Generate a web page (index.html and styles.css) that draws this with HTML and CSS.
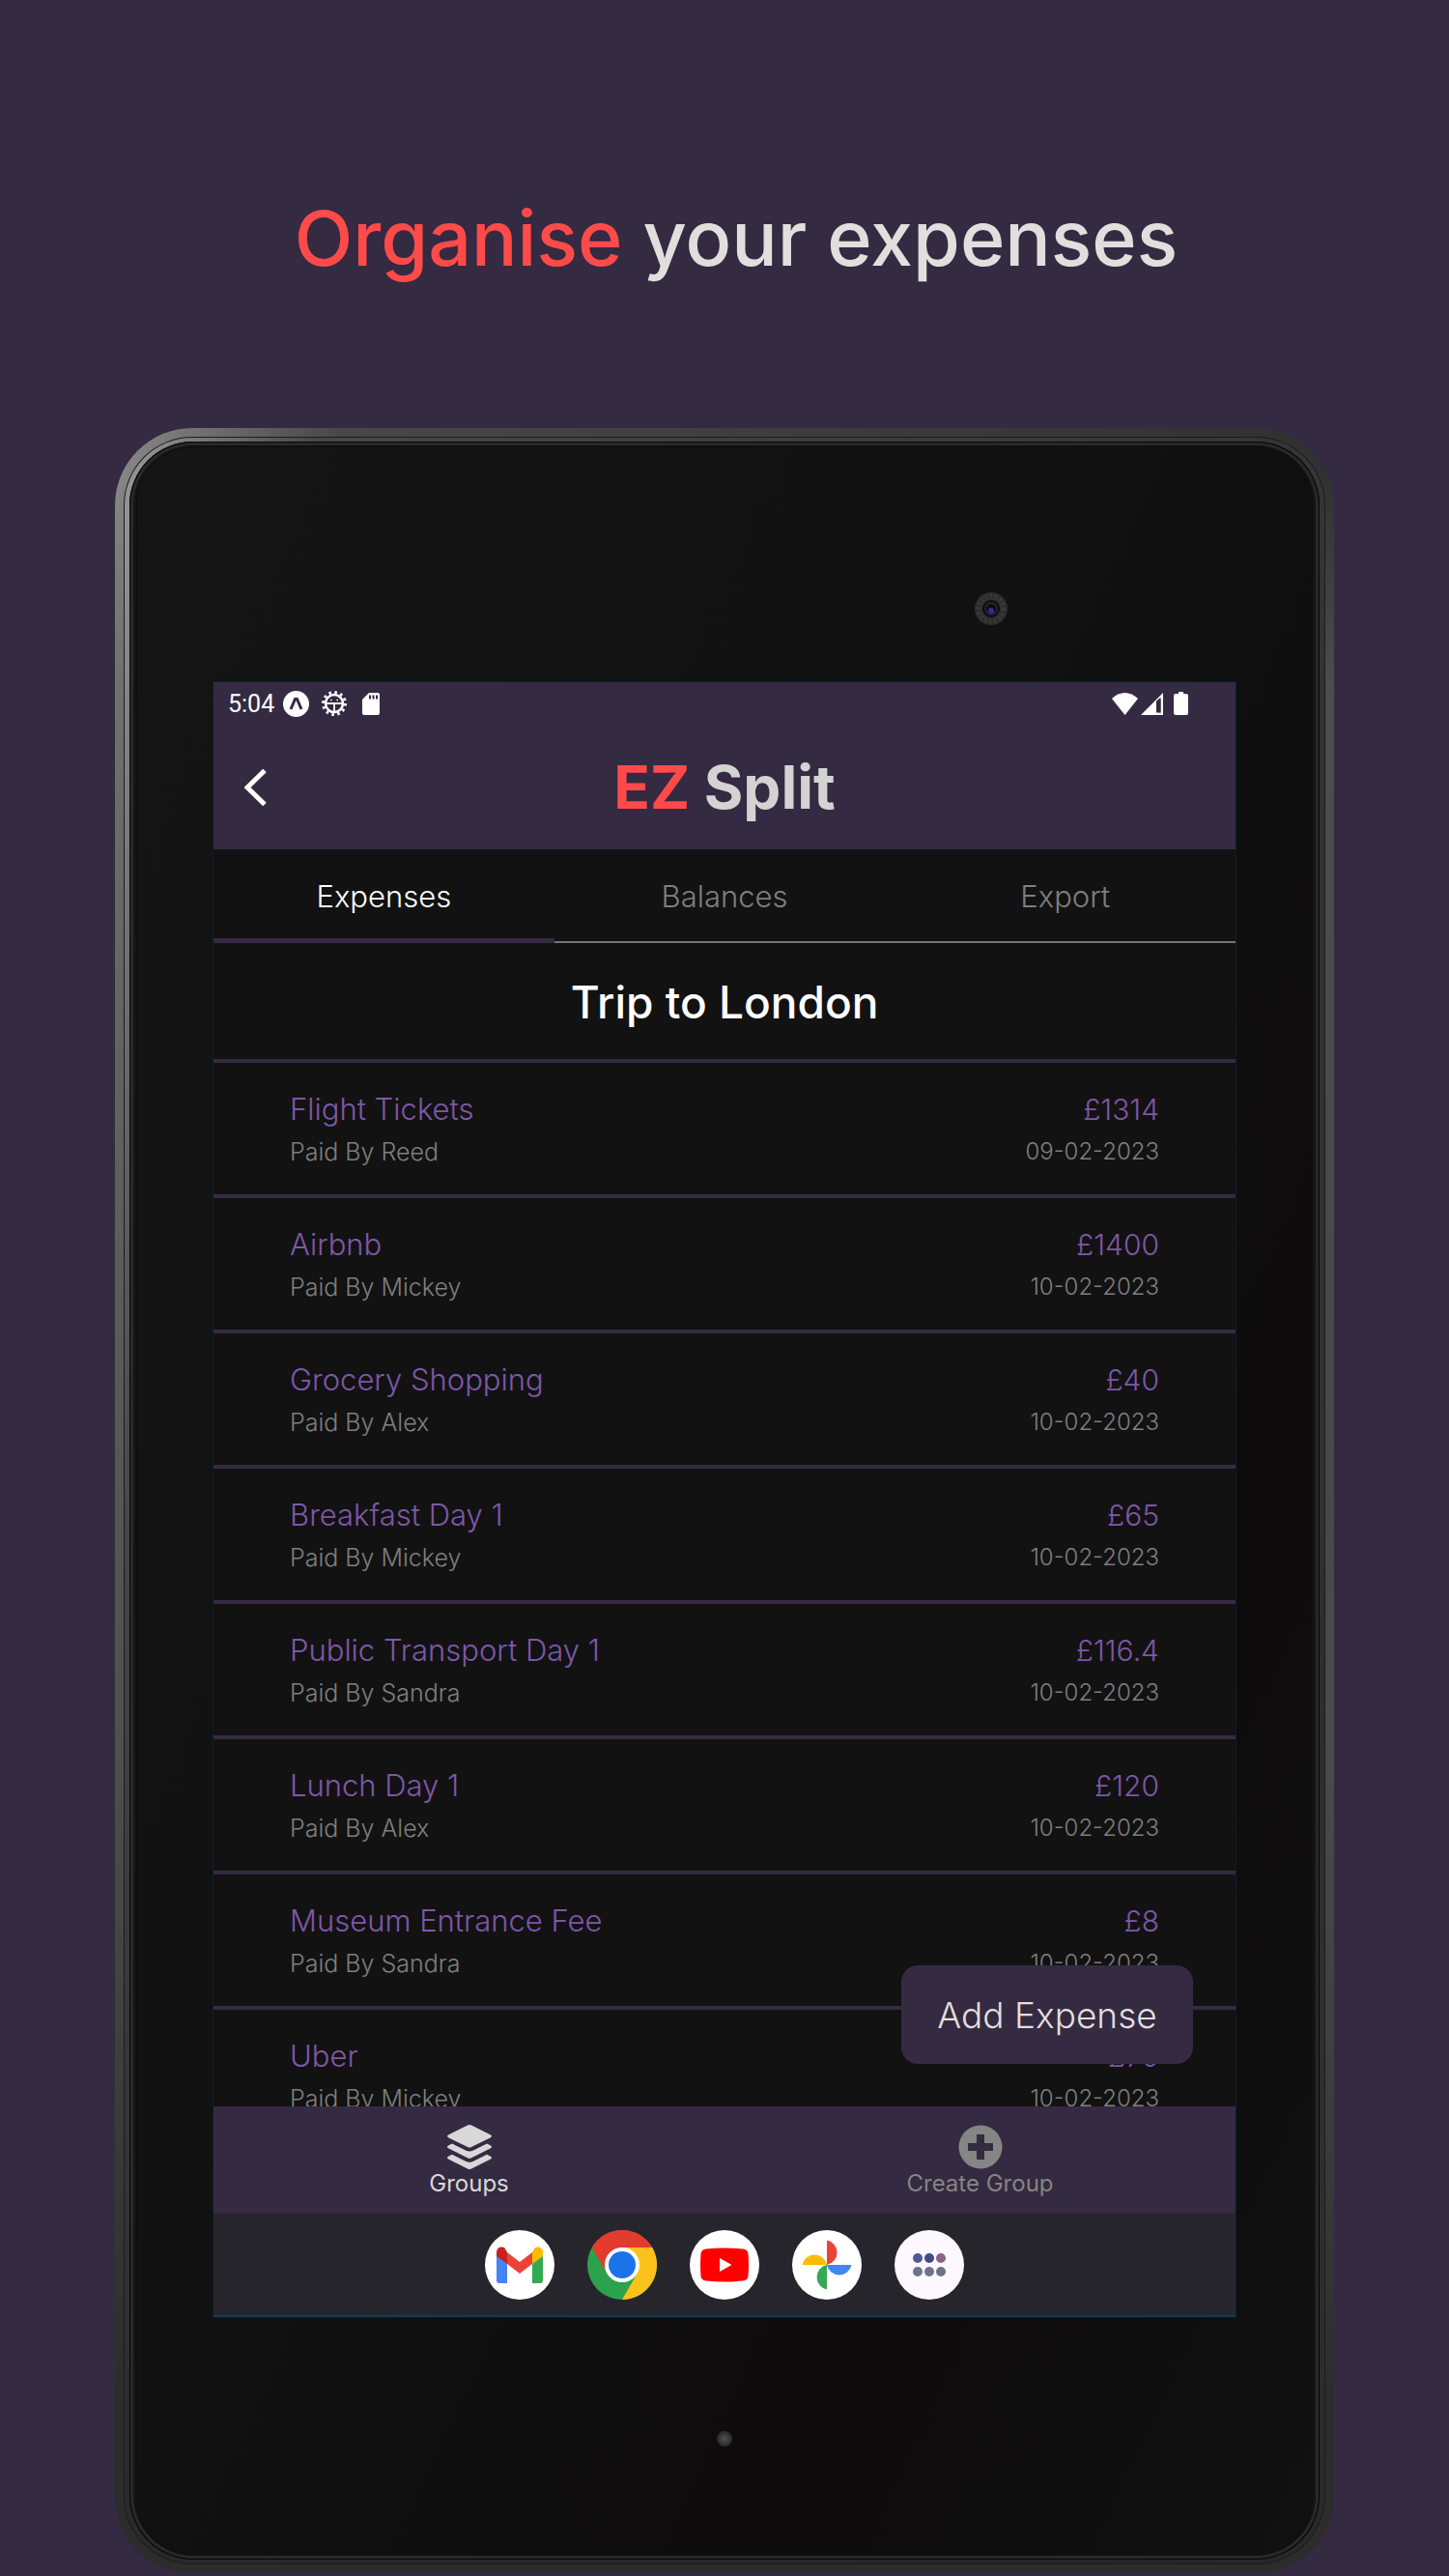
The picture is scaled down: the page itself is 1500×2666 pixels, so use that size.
FILE: index.html
```html
<!DOCTYPE html>
<html lang="en">
<head>
<meta charset="utf-8">
<meta name="viewport" content="width=device-width, initial-scale=1">
<title>EZ Split</title>
<link rel="stylesheet" href="styles.css">
</head>
<body>
<main class="page">
  <h1 class="headline"><span class="accent">Organise</span> your expenses</h1>

  <div class="device">
    <div class="groove"><div class="rim"><div class="edge"><div class="glass">
      <div class="bezel-top">
        <svg class="camera" viewBox="0 0 36 36" aria-hidden="true">
          <circle cx="18" cy="18" r="17" fill="#2e2e2e"/>
          <circle cx="18" cy="18" r="13" fill="none" stroke="#3a3a3a" stroke-width="5" stroke-dasharray="2 3"/>
          <circle cx="18" cy="18" r="9" fill="#0c0c10"/>
          <circle cx="18" cy="18" r="6" fill="none" stroke="#252530" stroke-width="2"/>
          <circle cx="18" cy="20" r="3" fill="#30308c"/>
        </svg>
      </div>

      <section class="screen">
        <header class="app-header">
          <div class="status">
            <span class="time">5:04</span>
            <svg class="s-expo" viewBox="0 0 27 27" aria-hidden="true"><circle cx="13.500" cy="13.500" r="13.500" fill="#fff"/><path d="M8 19 12.500 8.500h2L19 19" fill="none" stroke="#342a41" stroke-width="3"/></svg>
            <svg class="s-gear" viewBox="0 0 26 26" fill="none" stroke="#fff" aria-hidden="true"><circle cx="13" cy="13" r="11.500" stroke-width="3" stroke-dasharray="2.600 3.420"/><circle cx="13" cy="13" r="9" stroke-width="2.500"/><path d="M4 13h18M13 13v10" stroke-width="1.800"/><path d="M9 9.500h1.500M15.500 9.500H17" stroke-width="1.500"/></svg>
            <svg class="s-card" viewBox="0 0 18 23" aria-hidden="true"><path d="M7 0h9a2 2 0 0 1 2 2v19a2 2 0 0 1-2 2H2a2 2 0 0 1-2-2V7z" fill="#fff"/><path d="M8 2.500v4M11.500 2.500v4M15 2.500v4" stroke="#342a41" stroke-width="2"/></svg>
            <span class="spacer"></span>
            <svg class="s-wifi" viewBox="0 0 27 23" fill="#fff" aria-hidden="true"><path d="M0 6C8-2 19-2 27 6L13.500 23z"/></svg>
            <svg class="s-signal" viewBox="0 0 23 23" aria-hidden="true"><path d="M0 23 23 0v23z" fill="#fff"/><path d="M16 8.500 20.500 4.800V20.500H16z" fill="#342a41"/><path d="M18.500 7h2v13.500h-2z" fill="#342a41"/></svg>
            <svg class="s-battery" viewBox="0 0 15 24" fill="#fff" aria-hidden="true"><path d="M5 0h5v2h3a2 2 0 0 1 2 2v18a2 2 0 0 1-2 2H2a2 2 0 0 1-2-2V4a2 2 0 0 1 2-2h3z"/></svg>
          </div>
          <div class="titlebar">
            <button class="back" type="button" aria-label="Back"><svg viewBox="0 0 24 38" aria-hidden="true"><path d="M21 1.500 3 19l18 17.500" fill="none" stroke="#fff" stroke-width="5"/></svg></button>
            <h2 class="brand"><span class="accent">EZ</span> Split</h2>
          </div>
        </header>

        <nav class="tabs" aria-label="Trip">
          <a class="tab active" href="#expenses">Expenses</a>
          <a class="tab" href="#balances">Balances</a>
          <a class="tab" href="#export">Export</a>
        </nav>

        <h3 class="trip">Trip to London</h3>

        <div class="list-wrap">
          <ul class="list" id="expenses">
            <li class="row"><span class="name">Flight Tickets</span><span class="amount">£1314</span><span class="payer">Paid By Reed</span><time class="date">09-02-2023</time></li>
            <li class="row"><span class="name">Airbnb</span><span class="amount">£1400</span><span class="payer">Paid By Mickey</span><time class="date">10-02-2023</time></li>
            <li class="row"><span class="name">Grocery Shopping</span><span class="amount">£40</span><span class="payer">Paid By Alex</span><time class="date">10-02-2023</time></li>
            <li class="row"><span class="name">Breakfast Day 1</span><span class="amount">£65</span><span class="payer">Paid By Mickey</span><time class="date">10-02-2023</time></li>
            <li class="row"><span class="name">Public Transport Day 1</span><span class="amount">£116.4</span><span class="payer">Paid By Sandra</span><time class="date">10-02-2023</time></li>
            <li class="row"><span class="name">Lunch Day 1</span><span class="amount">£120</span><span class="payer">Paid By Alex</span><time class="date">10-02-2023</time></li>
            <li class="row"><span class="name">Museum Entrance Fee</span><span class="amount">£8</span><span class="payer">Paid By Sandra</span><time class="date">10-02-2023</time></li>
            <li class="row"><span class="name">Uber</span><span class="amount">£70</span><span class="payer">Paid By Mickey</span><time class="date">10-02-2023</time></li>
          </ul>
          <button class="add" type="button">Add Expense</button>
        </div>

        <nav class="bottom-nav" aria-label="Main">
          <a class="nav-item current" href="#groups">
            <svg viewBox="0 0 46 46" fill="currentColor" aria-hidden="true"><path d="M21 .600q2-1 4 0L44.500 10.200q3 1.600 0 3.200L25 23q-2 1-4 0L1.500 13.400q-3-1.600 0-3.200z"/><path d="m5 19.500 14.500 7.300q3.500 1.600 7 0L41 19.500l3.500 1.800q3 1.600 0 3.200L25 34.300q-2 1-4 0L1.500 24.500q-3-1.600 0-3.200z"/><path d="m5 30.800 14.500 7.300q3.500 1.600 7 0L41 30.800l3.500 1.800q3 1.600 0 3.200L25 45.400q-2 1-4 0L1.500 35.800q-3-1.600 0-3.200z"/></svg>
            Groups
          </a>
          <a class="nav-item" href="#create">
            <svg viewBox="0 0 46 46" aria-hidden="true"><circle cx="23" cy="23" r="22.500" fill="currentColor"/><path d="M23 10v26M10 23h26" stroke="#342a41" stroke-width="8"/></svg>
            Create Group
          </a>
        </nav>

        <div class="dock">
          <a href="#mail" aria-label="Gmail"><svg viewBox="0 0 72 72"><circle cx="36" cy="36" r="36" fill="#fff"/><path d="M12 26v26a3 3 0 0 0 3 3h8V34z" fill="#4285f4"/><path d="M60 26v26a3 3 0 0 1-3 3h-8V34z" fill="#34a853"/><path d="M49 23v12l11-8v-4c0-5-5-7-8.500-4.500z" fill="#fbbc04"/><path d="M23 23v12l-11-8v-4c0-5 5-7 8.500-4.500z" fill="#c5221f"/><path d="M23 23l13 10 13-10v12L36 45 23 35z" fill="#ea4335"/></svg></a>
          <a href="#browser" aria-label="Chrome"><svg viewBox="0 0 72 72"><circle cx="36" cy="36" r="36" fill="#2da24c"/><path d="M36 18h31.200A36 36 0 0 1 36 72l15.600-27z" fill="#fcc21b"/><path d="M4.800 18a36 36 0 0 1 62.400 0H36L20.400 45z" fill="#e33b2e"/><circle cx="36" cy="36" r="18" fill="#fff"/><circle cx="36" cy="36" r="14" fill="#1a73e8"/></svg></a>
          <a href="#video" aria-label="YouTube"><svg viewBox="0 0 72 72"><circle cx="36" cy="36" r="36" fill="#fff"/><path d="M17 19.500q19-2 38 0 5 .500 5.500 5 1 11.500 0 23-.500 4.500-5.500 5-19 2-38 0-5-.500-5.500-5-1-11.500 0-23 .500-4.500 5.500-5z" fill="#f00"/><path d="M31 29v14l12.500-7z" fill="#fff"/></svg></a>
          <a href="#photos" aria-label="Photos"><svg viewBox="0 0 72 72"><circle cx="36" cy="36" r="36" fill="#fff"/><path d="M36 10.500a13 13 0 0 1 0 25.500z" fill="#ea4335"/><path d="M61.500 36a13 13 0 0 1-25.500 0z" fill="#4285f4"/><path d="M36 61.500a13 13 0 0 1 0-25.500z" fill="#34a853"/><path d="M10.500 36a13 13 0 0 1 25.500 0z" fill="#fbbc04"/></svg></a>
          <a href="#apps" aria-label="All apps"><svg viewBox="0 0 72 72"><circle cx="36" cy="36" r="36" fill="#fdf8ff"/><circle cx="24" cy="29" r="5" fill="#4f5a94"/><circle cx="36" cy="29" r="5" fill="#404a85"/><circle cx="48" cy="29" r="5" fill="#8c6583"/><g fill="#70728a"><circle cx="24" cy="43" r="5"/><circle cx="36" cy="43" r="5"/><circle cx="48" cy="43" r="5"/></g></svg></a>
        </div>
      </section>

      <div class="bezel-bottom"><span class="led"></span></div>
    </div></div></div></div>
  </div>
</main>
</body>
</html>
```
FILE: styles.css
```css
* { box-sizing: border-box; }

:root {
  --plum: #342a41;
  --ink: #121212;
  --coral: #ff4a4a;
  --violet: #7e57a8;
  --grey: #7f7f7f;
}

body {
  margin: 0;
  background: var(--plum);
  font-family: Inter, "Noto Sans", sans-serif;
}

h1, h2, h3, ul { margin: 0; padding: 0; }
a { color: inherit; text-decoration: none; }
button { border: 0; padding: 0; background: none; font: inherit; color: inherit; cursor: pointer; }
svg { display: block; }
.accent { color: var(--coral); }

.page { padding: 198px 119px 3px; }

.headline {
  padding: 0 0 149px 24px;
  color: #e1dfdd;
  font-size: 79px;
  font-weight: 500;
  line-height: 96px;
  text-align: center;
}

/* Tablet body: nested rounded layers make the metal rim */
.device {
  padding: 9px;
  border-radius: 80px;
  background: linear-gradient(to bottom, transparent 2%, #6668 12%, #555a 60%, #2c2c2c 92%),
    linear-gradient(100deg, #8a8a8a, #484848 14%, #2c2c2c 88%, #686868);
}
.groove { padding: 1px; border-radius: 71px; background: #1c1c1c; }
.rim {
  padding: 4px 5px;
  border-radius: 70px;
  background: linear-gradient(to bottom, transparent 50%, #222c),
    linear-gradient(100deg, #999, #484848 12%, #303030 90%, #444);
}
.edge {
  padding: 6px 8px;
  border-radius: 66px;
  background: #161616;
  box-shadow: inset 0 0 0 1px #050505, inset 0 0 0 4px #292929;
}
.glass {
  padding: 0 79px;
  border-radius: 58px;
  background: linear-gradient(115deg, #151515, #111 45%, #0d0b0c 75%, #111);
  box-shadow: 0 0 3px #000;
}

.bezel-top { display: flex; justify-content: flex-end; height: 243px; padding: 149px 235px 0 0; }
.camera { width: 36px; height: 36px; }
.bezel-bottom { display: flex; justify-content: center; height: 245px; padding-top: 118px; }
.led { width: 16px; height: 16px; border-radius: 50%; background: radial-gradient(#555, #333 50%, #161616); }

.screen {
  display: flex;
  flex-direction: column;
  aspect-ratio: 1058 / 1692;
  background: var(--ink);
  border-bottom: 2px solid #103a4c;
  box-shadow: 0 0 0 1px #06202e;
}

.app-header { height: 173px; background: var(--plum); }
.status { display: flex; align-items: center; height: 44px; padding: 0 49px 0 15px; color: #fff; }
.time { margin-right: 9px; font-family: Roboto, sans-serif; font-size: 25px; }
.s-expo { width: 27px; margin-right: 13px; }
.s-gear { width: 26px; margin-right: 16px; }
.s-card { width: 18px; }
.spacer { flex: 1; }
.s-wifi { width: 27px; margin-right: 3px; }
.s-signal { width: 23px; margin-right: 11px; }
.s-battery { width: 15px; }

.titlebar { display: grid; grid-template-columns: 56px 1fr 56px; align-items: center; height: 129px; }
.back { display: flex; justify-content: flex-end; }
.back svg { width: 24px; height: 38px; }
.brand { color: #d3d3d3; font-size: 62px; font-weight: 700; line-height: 72px; text-align: center; }

.tabs { display: grid; grid-template-columns: repeat(3, 1fr); height: 97px; color: var(--grey); }
.tab {
  height: 97px;
  border-bottom: 2px solid #777;
  font-size: 31px;
  font-weight: 300;
  line-height: 97px;
  text-align: center;
}
.tab.active { border-bottom: 5px solid var(--plum); color: #fff; }

.trip {
  height: 124px;
  border-bottom: 4px solid var(--plum);
  color: #fff;
  font-size: 46px;
  font-weight: 500;
  line-height: 122px;
  text-align: center;
}

.list-wrap { position: relative; flex: 1; min-height: 0; overflow: hidden; }
.list { list-style: none; }
.row {
  display: grid;
  grid-template-columns: 1fr auto;
  grid-template-rows: 46px 40px;
  height: 140px;
  padding: 25px 79px 0 79px;
  border-bottom: 4px solid var(--plum);
  font-weight: 300;
}
.name, .amount { color: var(--violet); font-size: 31px; line-height: 46px; }
.payer, .date { color: var(--grey); font-size: 25px; line-height: 42px; }
.amount, .date { text-align: right; }
.amount { font-size: 30px; }
.date { font-size: 24px; }

.add {
  position: absolute;
  right: 44px;
  bottom: 44px;
  width: 302px;
  height: 102px;
  border-radius: 17px;
  background: var(--plum);
  color: #e1dfdd;
  font-size: 37px;
  font-weight: 300;
}

.bottom-nav { display: grid; grid-template-columns: 1fr 1fr; height: 111px; background: var(--plum); color: #858585; }
.nav-item { display: flex; flex-direction: column; align-items: center; padding-top: 19px; font-size: 24px; line-height: 30px; }
.nav-item svg { width: 46px; height: 46px; }
.current { color: #d8d8d8; }

.dock { display: flex; justify-content: center; align-items: center; gap: 34px; height: 105px; background: #26252b; }
.dock svg { width: 72px; height: 72px; }
```
